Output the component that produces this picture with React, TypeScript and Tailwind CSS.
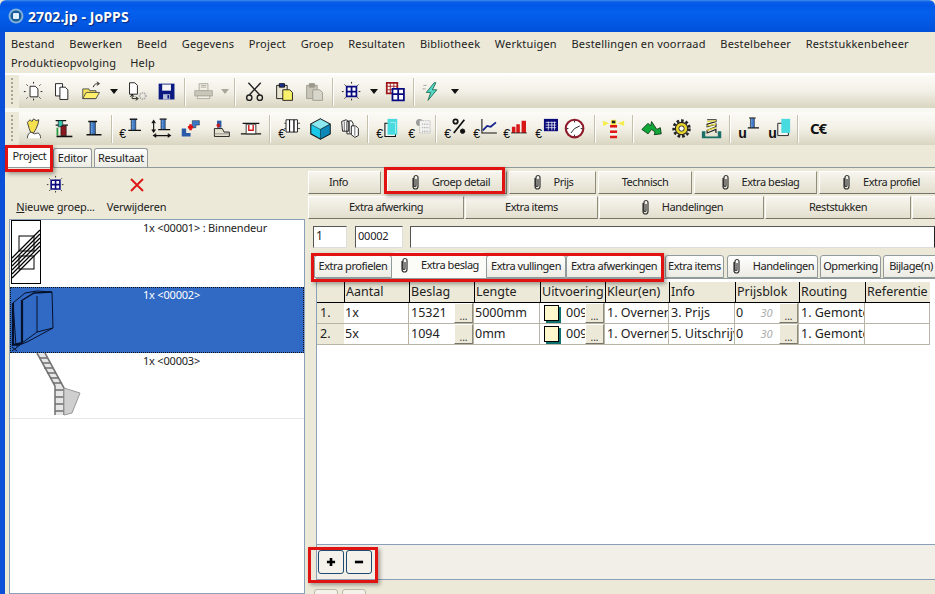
import React from "react";

const Svg = ({ children, w = 24, h = 24 }: { children: React.ReactNode; w?: number; h?: number }) => (
  <svg width={w * 0.88} height={h * 0.88} viewBox={`0 0 ${w} ${h}`} className="shrink-0 overflow-visible">{children}</svg>
);
const Euro = ({ y = 23 }: { y?: number }) => (
  <text x="-1" y={y} fontSize="14" fontFamily="Liberation Sans" fill="#111">€</text>
);
const Arrow = () => <svg width="8" height="5" viewBox="0 0 8 5" className="shrink-0"><path d="M0 0h8L4 5z" fill="#111" /></svg>;
const ArrowG = () => <svg width="8" height="5" viewBox="0 0 8 5" className="shrink-0"><path d="M0 0h8L4 5z" fill="#aaa69a" /></svg>;
const Rays = ({ c = "#111" }: { c?: string }) => (
  <path d="M12 1v3M12 20v3M1 12h3M20 12h3M4 4l2 2M20 4l-2 2M4 20l2-2M20 20l-2-2" stroke={c} strokeWidth="1" strokeDasharray="2 1" fill="none" />
);
const NewDoc = () => <Svg><Rays /><path d="M8 6h6l3 3v9H8z" fill="#fff" stroke="#111" /></Svg>;
const Copy = () => <Svg><path d="M4 3h8v14H4z" fill="#fff" stroke="#111" /><path d="M9 7h6l3 3v11H9z" fill="#fff" stroke="#111" /></Svg>;
const Open = () => <Svg><path d="M2 9h7l1 2h7v9H2z" fill="#f5e35c" stroke="#444" /><path d="M2 20l4-7h15l-4 7z" fill="#ffef6b" stroke="#444" /><path d="M14 7c1-4 4-4 6-4M18 1l3 2-3 2" fill="none" stroke="#111" /></Svg>;
const DocTransfer = () => <Svg><path d="M4 2h6l3 3v10H4z" fill="#fff" stroke="#111" /><path d="M7 15v5h6M11 18l3 2-3 2M5 18l2-3 2 3" fill="none" stroke="#111" /><circle cx="19" cy="17" r="3.5" fill="none" stroke="#aaa" strokeDasharray="1.5 1" strokeWidth="2" /></Svg>;
const Save = () => <Svg><path d="M3 3h18v18H3z" fill="#0a1a80" /><path d="M7 4h10v7H7z" fill="#f5f5f5" /><path d="M8 15h8v6H8z" fill="#b9c0d8" /><path d="M13 16h2v4h-2z" fill="#0a1a80" /></Svg>;
const Printer = () => <Svg><path d="M7 3h10v8H7z" fill="#f2f0e6" stroke="#a8a69a" /><path d="M9 5h6M9 7h6" stroke="#a8a69a" /><path d="M2 11h20v6H2z" fill="#c9c6b9" stroke="#a8a69a" /><path d="M5 17h14v3H5z" fill="#f2f0e6" stroke="#a8a69a" /></Svg>;
const Scissors = () => <Svg><path d="M5 2l13 14M19 2L6 16" stroke="#222" strokeWidth="1.6" fill="none" /><circle cx="6" cy="19" r="3" fill="none" stroke="#222" strokeWidth="1.6" /><circle cx="18" cy="19" r="3" fill="none" stroke="#222" strokeWidth="1.6" /></Svg>;
const Paste = ({ g = false }: { g?: boolean }) => (
  <Svg>
    <path d="M3 5h12v15H3z" fill={g ? "#c9c6b9" : "#e8e4d0"} stroke={g ? "#9a988c" : "#111"} />
    <path d="M6 3h6v4H6z" fill={g ? "#9a988c" : "#1a2f90"} stroke={g ? "#9a988c" : "#111"} />
    <path d="M10 10h8l3 3v9H10z" fill={g ? "#d8d6ca" : "#f9f06b"} stroke={g ? "#9a988c" : "#111"} />
  </Svg>
);
const GridRays = () => <Svg><Rays /><path d="M6.5 6.5h11v11h-11z" fill="#fff" stroke="#0a0a80" strokeWidth="2" /><path d="M12 6v12M6 12h12" stroke="#0a0a80" strokeWidth="2" /></Svg>;
const Multi = () => <Svg><path d="M2 2h12v12H2z" fill="#fff" stroke="#a01818" strokeWidth="2" /><path d="M6 2v12M10 2v12M2 6h12M2 10h12" stroke="#a01818" /><path d="M8.5 9h13v13h-13z" fill="#fff" stroke="#0a0a80" strokeWidth="2" /><path d="M15 9v13M8 15h13" stroke="#0a0a80" strokeWidth="2" /></Svg>;
const Bolt = () => <Svg><path d="M15 2L6 13h5l-3 9 10-12h-5l4-8z" fill="#55d8c8" stroke="#1a6a50" /><path d="M3 5h4M2 9h3" stroke="#555" strokeDasharray="1 1" /></Svg>;
const Face = () => <Svg><path d="M5 5l3-3 2 2 2-3 3 2 3-1-1 5-2 5-3 5H9l-2-5z" fill="#f6e04e" stroke="#333" /><path d="M5 23c0-4 2-6 4-7l4 2 4-1c2 1 3 3 3 6" fill="#fff" stroke="#333" /></Svg>;
const I1 = ({ c = "#3c78c8" }: { c?: string }) => (
  <g><path d="M6 4h10M4 19h17" stroke="#111" strokeWidth="1.8" /><path d="M8 4.5h6v14H8z" fill={c} stroke="#111" strokeWidth=".8" /><path d="M10 5v13" stroke="#b8d4f0" strokeDasharray="1 1" /></g>
);
const ProfColors = () => <Svg><path d="M3 3h12M3 8h14" stroke="#111" strokeWidth="1.4" /><path d="M6 3h5v7H6z" fill="#36c7b0" stroke="#111" strokeWidth=".7" /><path d="M9 9h6v11H9z" fill="#8a1a20" stroke="#111" strokeWidth=".7" /><path d="M5 11v9" stroke="#2a9a40" strokeWidth="2" /><path d="M4 21h18" stroke="#111" strokeWidth="1.8" /></Svg>;
const Prof = () => <Svg><I1 /></Svg>;
const EuroProf = () => <Svg><Euro /><g transform="translate(6 -2) scale(.85)"><I1 /></g></Svg>;
const ProfArrows = () => <Svg><path d="M3 4v11M1 6l2-3 2 3M1 13l2 3 2-3" stroke="#111" fill="none" strokeWidth="1.3" /><g transform="translate(5 -2) scale(.8)"><I1 /></g><path d="M4 20h17M6 18l-3 2 3 2M19 18l3 2-3 2" stroke="#111" fill="none" strokeWidth="1.3" /></Svg>;
const Repair = () => <Svg><path d="M2 12h5v9H2zM2 17h10v4H2z" fill="#2a5aa8" /><path d="M14 3h8v5h-4v3h-4z" fill="#3c78c8" stroke="#123" strokeWidth=".6" /><path d="M9 9h6v3H9zM10.5 7h3v7h-3z" fill="#e01010" /></Svg>;
const Shoe = () => <Svg><path d="M8 3h5v8H8z" fill="#2a5aa8" /><path d="M7 8l3-2 2 3-3 2z" fill="#d01818" /><path d="M5 12h9l2 4h6v5H5z" fill="#e6e2d0" stroke="#111" /><path d="M5 18h17" stroke="#888" /></Svg>;
const RedU = () => <Svg><path d="M3 6h19M1 18h23" stroke="#111" strokeWidth="1.4" /><path d="M7 7h11v11H7z" fill="#fff" stroke="#222" /><path d="M10 8v6h5V8" fill="none" stroke="#d01818" strokeWidth="1.6" /></Svg>;
const Columns = () => <g><path d="M6 3h4v14H6zM10 3h5v14h-5zM15 3h4v14h-4z" fill="#fff" stroke="#111" /><path d="M4 7h2M4 13h2M19 7h3M19 13h3" stroke="#111" strokeWidth=".8" /></g>;
const EuroCols = () => <Svg><Euro /><g transform="translate(2 -1)"><Columns /></g></Svg>;
const Cube = () => <Svg w={26} h={24}><path d="M13 1L24 7v11l-11 6L2 18V7z" fill="#18c8e8" stroke="#111" strokeWidth="1.2" /><path d="M13 1L24 7l-11 6L2 7z" fill="#8ce8ee" stroke="#111" strokeWidth=".6" /><path d="M13 13v11L24 18V7z" fill="#0d86b8" stroke="#111" strokeWidth=".6" /></Svg>;
const ColsBig = () => <Svg><path d="M3 4l5-2 3 2v11H4zM9 4l5-1 2 3v12H9z" fill="#fff" stroke="#111" /><path d="M14 9h5l3 3v8l-4 2-4-3z" fill="#fff" stroke="#111" /><path d="M6 4v11M12 4v13M18 10v10" stroke="#111" strokeWidth=".7" /></Svg>;
const EuroDoor = () => <Svg><Euro /><path d="M9 6h12v15H9z" fill="#f4f4f0" stroke="#111" strokeWidth="1.2" /><path d="M12 1h11v18H12z" fill="#47dbe0" /><path d="M15 5h6v12" stroke="#aef0f0" fill="none" /></Svg>;
const EuroGrid = () => <Svg><Euro /><circle cx="12" cy="5" r="4" fill="#999" /><path d="M12 3h12v14H12z" fill="#f2f2f0" stroke="#aaa" strokeDasharray="1 1" /><path d="M15 7h7M15 11h7M15 15h7" stroke="#888" strokeDasharray="1 1" /></Svg>;
const EuroPct = () => <Svg><Euro /><path d="M22 2L10 17" stroke="#111" strokeWidth="2" /><circle cx="12" cy="4" r="2.5" fill="none" stroke="#111" strokeWidth="2" /><circle cx="20" cy="15" r="2.5" fill="#111" stroke="#111" strokeWidth="1" /></Svg>;
const EuroLine = () => <Svg><Euro /><path d="M9 1v16h17" stroke="#111" fill="none" strokeWidth="1.2" /><path d="M10 14l5-5 4 1 6-5" stroke="#12208e" fill="none" strokeWidth="2" /></Svg>;
const EuroBars = () => <Svg><Euro /><path d="M9 10h4v7H9zM14 7h4v10h-4zM20 3h5v14h-5z" fill="#d81818" /><path d="M8 17h18" stroke="#222" /></Svg>;
const EuroTable = () => <Svg><Euro /><path d="M9 1h16v14H9z" fill="#0a0a78" /><path d="M11 5h12M11 8h12M11 11h12M14 4v10M18 4v10M21 4v10" stroke="#fff" strokeWidth=".8" /></Svg>;
const Clock = () => <Svg><circle cx="12" cy="12" r="10" fill="#fff" stroke="#8e1a2a" strokeWidth="2.4" /><path d="M12 3v2M12 19v2M3 12h2M19 12h2M12 12l-4 5M12 12l6-3" stroke="#222" strokeWidth="1.1" /></Svg>;
const Lighthouse = () => <Svg><path d="M0 3l7 3-7 3zM24 3l-7 3 7 3z" fill="#f6ee4a" /><path d="M9 2h6v6H9z" fill="#f6ee4a" /><path d="M10 3h4v3h-4z" fill="#222" /><path d="M8 8h8v3H8zM8 14h8v3H8zM8 20h8v3H8z" fill="#e01818" /><path d="M8 11h8v3H8zM8 17h8v3H8z" fill="#f4f4ee" /></Svg>;
const Arrows = () => <Svg><path d="M1 13L8 6l3 3 1-5 6 9 4-2 1 7-8 1 1-3-4-3-4 5z" fill="#12a838" stroke="#0a3818" strokeWidth="1" /></Svg>;
const Gear = () => <Svg><circle cx="12" cy="12" r="7" fill="#e8d62c" stroke="#222" strokeWidth="1.2" /><circle cx="12" cy="12" r="9" fill="none" stroke="#222" strokeWidth="3" strokeDasharray="3 2.2" /><circle cx="12" cy="12" r="3" fill="#fff" stroke="#222" /></Svg>;
const Spring = () => <Svg><path d="M1 15h4v5h14v-5h4v8H1z" fill="#1a7068" /><path d="M5 18h14v3H5z" fill="#e6e2d0" /><path d="M7 2h10v2L7 7v3l10-3v3L7 14v3l10-4v4" fill="none" stroke="#222" strokeWidth="1.4" /><path d="M7 4l10-1M7 9l10-2M7 14l10-3" stroke="#e9dc40" strokeWidth="1.4" /></Svg>;
const UProf = () => <Svg><text x="-1" y="23" fontSize="16" fontWeight="700" fontFamily="Liberation Sans" fill="#111">u</text><g transform="translate(7 -3) scale(.75)"><I1 /></g></Svg>;
const UDoor = () => <Svg><text x="-1" y="23" fontSize="16" fontWeight="700" fontFamily="Liberation Sans" fill="#111">u</text><path d="M10 6h12v14H10z" fill="#f4f4f0" stroke="#111" /><path d="M14 1h10v16H14z" fill="#47dbe0" /></Svg>;

const C = ({ w, children }: { w: string; children?: React.ReactNode }) => (
  <div className={`${w} shrink-0 flex items-center justify-center`}>{children}</div>
);
const S = ({ w }: { w: string }) => (
  <div className={`${w} shrink-0 flex justify-center`}><div className="w-[2px] h-[28px] border-l border-l-[#c4c0ac] border-r border-r-white" /></div>
);
const Grip = () => (
  <div className="w-[14px] shrink-0 flex justify-center pt-[3px]">
    <div className="w-[2px] h-[26px] border-l-2 border-dotted border-[#a8a595]" />
  </div>
);
const Bar = ({ children }: { children: React.ReactNode }) => (
  <div className="flex h-[33px] shrink-0">
    <Grip />
    <div className="flex-1 flex items-center bg-linear-to-b from-[#fcfbf7] via-[#f2f0e6] to-[#d9d5c1]">{children}</div>
  </div>
);

const Clip = () => (
  <svg width="11" height="17" viewBox="0 0 11 17" className="shrink-0">
    <path d="M3 4v8.5a2.5 2.5 0 0 0 5 0V3.5a2 2 0 0 0-4 0v8a1 1 0 0 0 2 0V5" fill="none" stroke="#333" strokeWidth="1.2" />
  </svg>
);

const Btn = ({ w, clip, extra = "", children }: { w: string; clip?: boolean; extra?: string; children: React.ReactNode }) => (
  <div className={`${w} ${extra} shrink-0 h-[23px] flex items-center justify-center gap-[11px] text-[11px] tracking-[-.45px] text-[#222] border border-t-white border-l-white border-r-[#8f8c7e] border-b-[#77756a] bg-linear-to-b from-[#f7f5ee] to-[#e3dfce]`}>
    {clip && <Clip />}
    <span className="whitespace-nowrap">{children}</span>
  </div>
);

const Tab = ({ w, active, clip, children }: { w: string; active?: boolean; clip?: boolean; children: React.ReactNode }) => (
  <div className={`${w} shrink-0 flex items-center justify-center gap-[11px] text-[11px] tracking-[-.45px] text-[#222] rounded-t-[3px] ${active ? "h-[26px] bg-[#fbfbf8]" : "h-[23px] mt-[3px] border border-[#919b9c] bg-linear-to-b from-white to-[#ecebe3]"}`}>
    {clip && <Clip />}
    <span className="whitespace-nowrap">{children}</span>
  </div>
);

const More = () => (
  <div className="absolute right-0 top-0 w-[19px] h-[20px] bg-[#ece9d8] border border-t-white border-l-white border-r-[#8f8c7e] border-b-[#77756a] flex items-end justify-center text-[10px] leading-[12px] text-[#333]">...</div>
);

const H = ({ children }: { children?: React.ReactNode }) => (
  <div className="h-[21px] bg-[#ece9d8] border-l border-l-black border-b border-b-black pl-[1px] text-[12.5px] leading-[20px] text-[#222] whitespace-nowrap overflow-hidden">{children}</div>
);
const Cell = ({ children, more, left }: { children?: React.ReactNode; more?: boolean; left?: boolean }) => (
  <div className={`relative h-[21px] border-r border-b border-[#b8b5a6] text-[12.5px] leading-[19px] text-[#222] whitespace-nowrap overflow-hidden ${left ? "pl-[1px]" : "pl-[2px]"}`}>
    {children}
    {more && <More />}
  </div>
);
const Swatch = () => (
  <span className="inline-block align-top mt-[2px] ml-[2px] mr-[7px] w-[15px] h-[16px] bg-[#fff8cc] border border-black shadow-[2px_2px_0_#0e6f6f]" />
);
const Row = ({ n, aantal, beslag, lengte, info }: { n: string; aantal: string; beslag: string; lengte: string; info: string }) => (
  <>
    <div className="h-[21px] bg-[#ece9d8] border-b border-b-[#b8b5a6] pl-[3px] text-[12.5px] leading-[19px] text-[#222]">{n}</div>
    <Cell left>{aantal}</Cell>
    <Cell more>{beslag}</Cell>
    <Cell left>{lengte}</Cell>
    <Cell more><Swatch />009</Cell>
    <Cell>1. Overner</Cell>
    <Cell>{info}</Cell>
    <Cell more left>0 <span className="ml-[14px] italic text-[#aaa] text-[11px]">30</span></Cell>
    <Cell>1. Gemonteerd</Cell>
    <Cell />
  </>
);

const DoorThumb = () => (
  <svg width="31" height="65" viewBox="0 0 31 65" className="shrink-0">
    <rect x=".5" y=".5" width="29" height="63" fill="#fff" stroke="#000" />
    <rect x="8" y="16" width="15" height="15" fill="none" stroke="#000" />
    <rect x="8" y="36" width="15" height="13" fill="none" stroke="#000" />
    <path d="M1 38L29 10M1 42L29 14M1 46L29 18M1 50L29 22M1 54L29 26M1 58L29 30" stroke="#000" strokeWidth="1.3" />
  </svg>
);
const BoxThumb = () => (
  <svg width="44" height="65" viewBox="0 0 44 65" className="shrink-0">
    <path d="M2 16l12-10 12-2 15 1 1 36-26 14-11 4z" fill="none" stroke="#05102a" strokeWidth="1" />
    <path d="M2 16v42l9-2V14" fill="none" stroke="#05102a" strokeWidth="2.2" />
    <path d="M10 14l13-8 18-1" fill="none" stroke="#05102a" strokeWidth="1.4" />
    <path d="M26 9v36M11 56l15-11 16-4" fill="none" stroke="#05102a" strokeWidth="1" />
    <path d="M1 60l5 4M1 64l8-6" stroke="#05102a" />
  </svg>
);
const StairThumb = () => (
  <svg width="50" height="64" viewBox="0 0 50 64" className="shrink-0">
    <path d="M1 0h8l19 35 16 5-8 20-8 2h-9V33z" fill="#e6e6e6" />
    <path d="M1 0l18 33v29M9 0l19 35v27" fill="none" stroke="#777" strokeWidth="1.6" />
    <path d="M3 5h8M6 10h8M8 15h9M11 20h9M14 25h9M17 30h9M19 37h9M19 44h9M19 51h9M19 58h9" stroke="#6f6f6f" strokeWidth="1.3" />
    <path d="M28 35l16 5-8 20-8 2z" fill="#cfcfcf" stroke="#999" />
  </svg>
);

const ListRow = ({ thumb, text, sel, h }: { thumb: React.ReactNode; text: string; sel?: boolean; h: string }) => (
  <div className={`${h} flex text-[11px] tracking-[-.2px] leading-[14px] pl-[1px] ${sel ? "bg-[#316ac5] text-white outline-1 outline-dotted outline-[#111] -outline-offset-1" : "bg-white text-[#222]"}`}>
    <div className="w-[132px] shrink-0 flex">{thumb}</div>
    <div className="whitespace-nowrap pt-[1px]">{text}</div>
  </div>
);

const Red = ({ cls }: { cls: string }) => (
  <div className={`absolute border-[3px] border-[#e01212] shadow-[2px_2px_4px_rgba(0,0,0,.35)] ${cls}`} />
);

const menu1 = ["Bestand", "Bewerken", "Beeld", "Gegevens", "Project", "Groep", "Resultaten", "Bibliotheek", "Werktuigen", "Bestellingen en voorraad", "Bestelbeheer", "Reststukkenbeheer"];

export default function App() {
  return (
    <div className="relative w-[935px] h-[594px] overflow-hidden bg-[#ece9d8] flex flex-col [font-family:'Liberation_Sans',Arial,sans-serif]">
      {/* Title bar */}
      <div className="h-[32px] shrink-0 flex items-center pl-[8px] gap-[4px] rounded-t-[6px] bg-[linear-gradient(to_bottom,#3d8cf0_0,#0a5ce6_2px,#0058e8_6px,#0460ee_12px,#0255e0_26px,#0050d8_100%)]">
        <svg width="16" height="16" viewBox="0 0 16 16" className="shrink-0">
          <circle cx="8" cy="8" r="7.5" fill="#7fb0d8" />
          <circle cx="8" cy="8" r="5.5" fill="#1c5a96" />
          <rect x="5" y="5" width="6" height="6" rx="1" fill="#dff0ff" />
        </svg>
        <span className="text-white font-bold text-[14px] tracking-[.1px] [text-shadow:1px_1px_1px_#0a2a80]">2702.jp - JoPPS</span>
      </div>
      <div className="flex-1 min-h-0 flex flex-col border-l-[5px] border-l-[#0a4fd8]">
        {/* Menu */}
        <div className="h-[41px] shrink-0 pl-[6px] pt-[2px] text-[11px] tracking-[.2px] text-[#222] leading-[19px]">
          <div className="flex gap-[14.6px]">{menu1.map((m) => <span key={m} className="whitespace-nowrap">{m}</span>)}</div>
          <div className="flex gap-[14px]"><span>Produktieopvolging</span><span>Help</span></div>
        </div>
        <div className="h-[2px] shrink-0 bg-white" />
        <Bar>
          <C w="w-[29px]"><NewDoc /></C><C w="w-[29px]"><Copy /></C><C w="w-[29px]"><Open /></C><C w="w-[15px]"><Arrow /></C>
          <C w="w-[31px]"><DocTransfer /></C><C w="w-[29px]"><Save /></C><S w="w-[7px]" />
          <C w="w-[32px]"><Printer /></C><C w="w-[10px]"><ArrowG /></C><S w="w-[10px]" />
          <C w="w-[30px]"><Scissors /></C><C w="w-[30px]"><Paste /></C><C w="w-[30px]"><Paste g /></C><S w="w-[6px]" />
          <C w="w-[32px]"><GridRays /></C><C w="w-[12px]"><Arrow /></C><C w="w-[32px]"><Multi /></C><S w="w-[4px]" />
          <C w="w-[32px]"><Bolt /></C><C w="w-[14px]"><Arrow /></C>
        </Bar>
        <div className="h-[4px] shrink-0 bg-white/70" />
        <Bar>
          <C w="w-[30px]"><Face /></C><C w="w-[29px]"><ProfColors /></C><C w="w-[32px]"><Prof /></C><S w="w-[4px]" />
          <C w="w-[33px]"><EuroProf /></C><C w="w-[29px]"><ProfArrows /></C><C w="w-[30px]"><Repair /></C><C w="w-[30px]"><Shoe /></C><C w="w-[30px]"><RedU /></C><S w="w-[8px]" />
          <C w="w-[32px]"><EuroCols /></C><C w="w-[28px]"><Cube /></C><C w="w-[32px]"><ColsBig /></C><S w="w-[4px]" />
          <C w="w-[36px]"><EuroDoor /></C><C w="w-[28px]"><EuroGrid /></C><S w="w-[4px]" />
          <C w="w-[36px]"><EuroPct /></C><C w="w-[22px]"><EuroLine /></C><C w="w-[38px]"><EuroBars /></C><C w="w-[26px]"><EuroTable /></C><C w="w-[30px]"><Clock /></C><S w="w-[10px]" />
          <C w="w-[28px]"><Lighthouse /></C><S w="w-[10px]" />
          <C w="w-[28px]"><Arrows /></C><C w="w-[32px]"><Gear /></C><C w="w-[28px]"><Spring /></C><S w="w-[8px]" />
          <C w="w-[32px]"><UProf /></C><C w="w-[28px]"><UDoor /></C><S w="w-[8px]" />
          <C w="w-[32px]"><span className="font-bold text-[15px] text-[#111] tracking-[-1px]">C€</span></C>
        </Bar>
        {/* Main tabs */}
        <div className="h-[23px] shrink-0 flex items-end pl-[1px] border-b border-b-[#8f9a9b] text-[11px] tracking-[-.25px] text-[#222]">
          <div className="w-[47px] h-[21px] shrink-0 bg-white/90 flex items-center justify-center">Project</div>
          <div className="w-[39px] h-[19px] shrink-0 rounded-t-[3px] border border-b-0 border-[#919b9c] bg-linear-to-b from-white to-[#ecebe3] flex items-center justify-center">Editor</div>
          <div className="w-[54px] h-[19px] ml-[2px] shrink-0 rounded-t-[3px] border border-b-0 border-[#919b9c] bg-linear-to-b from-white to-[#ecebe3] flex items-center justify-center">Resultaat</div>
        </div>
        <div className="flex-1 min-h-0 flex">
          {/* Left */}
          <div className="w-[300px] shrink-0 flex flex-col pl-[4px]">
            <div className="h-[51px] shrink-0 flex pt-[5px] text-[11px] tracking-[-.2px] leading-[14px] text-[#222]">
              <div className="w-[90px] flex flex-col items-center gap-[3px] pl-[3px]">
                <div className="scale-90 h-[24px] flex items-center"><GridRays /></div>
                <span className="whitespace-nowrap"><span className="underline">N</span>ieuwe groep...</span>
              </div>
              <div className="ml-[5px] w-[65px] flex flex-col items-center gap-[3px]">
                <svg width="24" height="24" viewBox="0 0 24 24"><path d="M6 6l12 12M18 6L6 18" stroke="#dc1a1a" strokeWidth="2" /></svg>
                <span>Verwijderen</span>
              </div>
            </div>
            <div className="flex-1 min-h-0 border border-[#8aa0b8] bg-white">
              <ListRow h="h-[67px]" thumb={<DoorThumb />} text="1x <00001> : Binnendeur" />
              <ListRow h="h-[66px]" sel thumb={<BoxThumb />} text="1x <00002>" />
              <div className="border-b border-b-[#e8e8e8]">
                <ListRow h="h-[65px]" thumb={<div className="pl-[25px]"><StairThumb /></div>} text="1x <00003>" />
              </div>
            </div>
          </div>
          {/* Right */}
          <div className="flex-1 min-w-0 overflow-hidden pl-[3px] flex flex-col">
            <div className="flex gap-[2px] pt-[3px] shrink-0">
              <Btn w="w-[73px]" extra="pr-[12px]">Info</Btn>
              <div className="w-[2px] shrink-0" />
              <Btn w="w-[120px]" extra="pl-[6px]" clip>Groep detail</Btn>
              <Btn w="w-[87px]" clip>Prijs</Btn>
              <Btn w="w-[94px]">Technisch</Btn>
              <Btn w="w-[123px]" extra="pl-[8px]" clip>Extra beslag</Btn>
              <Btn w="w-[123px]" clip>Extra profiel</Btn>
            </div>
            <div className="flex gap-[1px] pt-[2px] shrink-0">
              <Btn w="w-[156px]">Extra afwerking</Btn>
              <Btn w="w-[133px]">Extra items</Btn>
              <Btn w="w-[165px]" clip>Handelingen</Btn>
              <Btn w="w-[146px]">Reststukken</Btn>
              <Btn w="w-[40px]"> </Btn>
            </div>
            <div className="flex pt-[7px] pl-[5px] shrink-0 text-[12px] leading-[18px] text-[#222]">
              <div className="w-[34px] h-[22px] shrink-0 bg-white border border-t-[#555] border-l-[#555] border-r-[#ddd] border-b-[#ddd] pl-[2px]">1</div>
              <div className="w-[48px] h-[22px] shrink-0 ml-[8px] bg-white border border-t-[#555] border-l-[#555] border-r-[#ddd] border-b-[#ddd] pl-[2px] text-[11px] tracking-[-.2px]">00002</div>
              <div className="flex-1 h-[22px] ml-[7px] bg-white border border-t-[#555] border-l-[#555] border-b-[#ddd]" />
            </div>
            <div className="flex pt-[4px] pl-[6px] shrink-0">
              <Tab w="w-[78px]">Extra profielen</Tab>
              <Tab w="w-[94px]" active clip>Extra beslag</Tab>
              <Tab w="w-[80px]">Extra vullingen</Tab>
              <Tab w="w-[96px]">Extra afwerkingen</Tab>
              <div className="w-[3px] shrink-0" />
              <Tab w="w-[59px]">Extra items</Tab>
              <div className="w-[3px] shrink-0" />
              <Tab w="w-[91px]" clip>Handelingen</Tab>
              <div className="w-[2px] shrink-0" />
              <Tab w="w-[61px]">Opmerking</Tab>
              <div className="w-[2px] shrink-0" />
              <Tab w="w-[56px]">Bijlage(n)</Tab>
            </div>
            <div className="ml-[8px] h-[302px] shrink-0 border-l border-l-[#8aa0b8] border-t border-t-[#8f9a9b] border-b border-b-[#8aa0b8] flex flex-col">
              <div className="flex-1 min-h-0 bg-white pt-[3px]">
                <div className="grid grid-cols-[27px_65px_65px_66px_65px_64px_66px_64px_66px_65px]">
                  <div className="h-[21px] bg-[#ece9d8] border-b border-b-black" />
                  {["Aantal", "Beslag", "Lengte", "Uitvoering", "Kleur(en)", "Info", "Prijsblok", "Routing", "Referentie"].map((h) => <H key={h}>{h}</H>)}
                  <Row n="1." aantal="1x" beslag="15321" lengte="5000mm" info="3. Prijs" />
                  <Row n="2." aantal="5x" beslag="1094" lengte="0mm" info="5. Uitschrijven" />
                </div>
              </div>
              <div className="h-[35px] shrink-0 bg-[#f1efe8] border-t border-t-[#8aa0b8] flex items-center pl-[1px] gap-[2px]">
                {["M12 5v14M5 12h14", "M5 12h14"].map((d) => (
                  <div key={d} className="w-[26px] h-[24px] shrink-0 rounded-[3px] border border-[#1c4a70] bg-[#f4f2ea] flex items-center justify-center">
                    <svg width="14" height="14" viewBox="0 0 24 24"><path d={d} stroke="#000" strokeWidth="4.5" fill="none" /></svg>
                  </div>
                ))}
              </div>
            </div>
            <div className="flex gap-[4px] pt-[9px] pl-[6px] shrink-0">
              <div className="w-[24px] h-[8px] rounded-t-[3px] border border-[#b8b8a8] bg-[#f4f2ea]" />
              <div className="w-[24px] h-[8px] rounded-t-[3px] border border-[#b8b8a8] bg-[#f4f2ea]" />
            </div>
          </div>
        </div>
      </div>
      {/* Red annotation frames */}
      <Red cls="left-[5px] top-[145px] w-[48px] h-[27px]" />
      <Red cls="left-[384px] top-[167px] w-[121px] h-[27px]" />
      <Red cls="left-[311px] top-[253px] w-[353px] h-[29px]" />
      <Red cls="left-[308px] top-[547px] w-[70px] h-[36px]" />
    </div>
  );
}
